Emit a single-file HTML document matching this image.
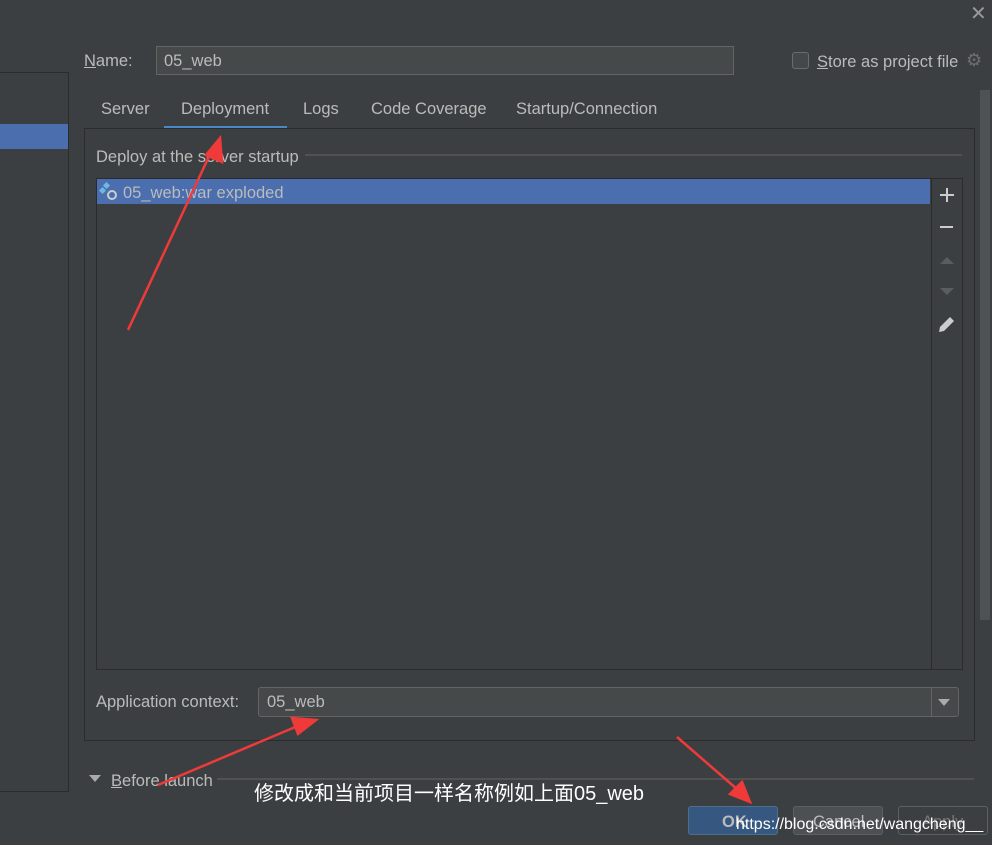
<!DOCTYPE html>
<html><head><meta charset="utf-8"><style>
*{box-sizing:border-box;margin:0;padding:0}
body{width:992px;height:845px;background:#3c3f41;position:relative;overflow:hidden;font-family:"Liberation Sans","Noto Sans CJK SC",sans-serif;font-size:16.5px;color:#bbbbbb}
.a{position:absolute}
.t{position:absolute;white-space:nowrap;line-height:20px}
</style></head><body>
<div class="a" style="left:0;top:72px;width:69px;height:720px;border-right:1px solid #2b2b2b;border-top:1px solid #2b2b2b;border-bottom:1px solid #2b2b2b"></div>
<div class="a" style="left:0;top:124px;width:68px;height:25px;background:#4b6eaf"></div>
<div class="t" style="left:970px;top:4px;font-size:20px;color:#999">✕</div>
<div class="t" style="left:84px;top:51px"><u>N</u>ame:</div>
<div class="a" style="left:156px;top:46px;width:578px;height:29px;background:#45494a;border:1px solid #646464"></div>
<div class="t" style="left:164px;top:51px">05_web</div>
<div class="a" style="left:792px;top:52px;width:17px;height:17px;border:1px solid #6b6b6b;border-radius:3px;background:#43494a"></div>
<div class="t" style="left:817px;top:52px"><u>S</u>tore as project file</div>
<div class="t" style="left:966px;top:50px;font-size:18px;color:#6e6e6e">⚙</div>
<div class="a" style="left:980px;top:90px;width:10px;height:530px;background:#4e5254"></div>
<div class="t" style="left:101px;top:99px">Server</div>
<div class="t" style="left:181px;top:99px">Deployment</div>
<div class="t" style="left:303px;top:99px">Logs</div>
<div class="t" style="left:371px;top:99px">Code Coverage</div>
<div class="t" style="left:516px;top:99px">Startup/Connection</div>
<div class="a" style="left:164px;top:126px;width:123px;height:3px;background:#4a88c7"></div>
<div class="a" style="left:84px;top:128px;width:891px;height:613px;border:1px solid #2b2b2b"></div>
<div class="t" style="left:96px;top:147px">Deploy at the server startup</div>
<div class="a" style="left:305px;top:154px;width:657px;height:2px;background:#515151"></div>
<div class="a" style="left:96px;top:178px;width:867px;height:492px;border:1px solid #2b2b2b"></div>
<div class="a" style="left:931px;top:179px;width:1px;height:490px;background:#2b2b2b"></div>
<div class="a" style="left:97px;top:179px;width:833px;height:25px;background:#4b6eaf"></div>
<svg class="a" style="left:99px;top:182px" width="20" height="20"><rect x="5" y="1" width="5" height="5" fill="#6fb8e0" transform="rotate(45 7.5 3.5)"/><rect x="1" y="6" width="5" height="5" fill="#6fb8e0" transform="rotate(45 3.5 8.5)"/><circle cx="13" cy="13" r="5" fill="#ccc"/><circle cx="13" cy="13" r="3" fill="#4b6eaf"/></svg>
<div class="t" style="left:123px;top:183px">05_web:war exploded</div>
<div class="a" style="left:940px;top:194px;width:14px;height:2px;background:#ccc"></div>
<div class="a" style="left:946px;top:188px;width:2px;height:14px;background:#ccc"></div>
<div class="a" style="left:940px;top:226px;width:13px;height:2px;background:#ccc"></div>
<svg class="a" style="left:938px;top:254px" width="18" height="44"><path d="M2 10L9 3L16 10Z M2 34L16 34L9 41Z" fill="#5a5d5f"/></svg>
<svg class="a" style="left:938px;top:315px" width="18" height="18"><path d="M1 17L2 12L12 2L16 6L6 16Z" fill="#ccc"/></svg>
<div class="t" style="left:96px;top:692px">Application context:</div>
<div class="a" style="left:258px;top:687px;width:701px;height:30px;background:#45494a;border:1px solid #646464;border-radius:3px"></div>
<div class="a" style="left:931px;top:688px;width:1px;height:28px;background:#646464"></div>
<svg class="a" style="left:937px;top:698px" width="14" height="10"><path d="M1 1L13 1L7 8Z" fill="#aaa"/></svg>
<div class="t" style="left:267px;top:692px">05_web</div>
<svg class="a" style="left:88px;top:774px" width="14" height="10"><path d="M1 1L13 1L7 8Z" fill="#aaa"/></svg>
<div class="t" style="left:111px;top:771px"><u>B</u>efore launch</div>
<div class="a" style="left:217px;top:778px;width:757px;height:2px;background:#515151"></div>
<div class="a" style="left:688px;top:806px;width:90px;height:29px;background:#365880;border:1px solid #4c708c;border-radius:3px"></div>
<div class="t" style="left:722px;top:812px;font-weight:bold">OK</div>
<div class="a" style="left:793px;top:806px;width:90px;height:29px;background:#4c5052;border:1px solid #5e6060;border-radius:3px"></div>
<div class="t" style="left:813px;top:812px">Cancel</div>
<div class="a" style="left:898px;top:806px;width:90px;height:29px;border:1px solid #5e6060;border-radius:3px"></div>
<div class="t" style="left:922px;top:812px;color:#777">Apply</div>
<div class="t" style="left:254px;top:782px;font-size:20px;color:#fff;line-height:24px">修改成和当前项目一样名称例如上面05_web</div>
<div class="t" style="left:736px;top:815px;font-size:16px;color:#fff;line-height:20px">https://blog.csdn.net/wangcheng__</div>
<svg class="a" style="left:0;top:0" width="992" height="845">
<g fill="#f03a3a" stroke="#f03a3a" stroke-width="2.5">
<line x1="128" y1="330" x2="212" y2="150"/><path d="M220 138L222 162L206 155Z"/>
<line x1="158" y1="785" x2="300" y2="725"/><path d="M316 720L298 734L292 718Z"/>
<line x1="677" y1="737" x2="738" y2="790"/><path d="M750 802L730 794L742 782Z"/>
</g></svg>
</body></html>
